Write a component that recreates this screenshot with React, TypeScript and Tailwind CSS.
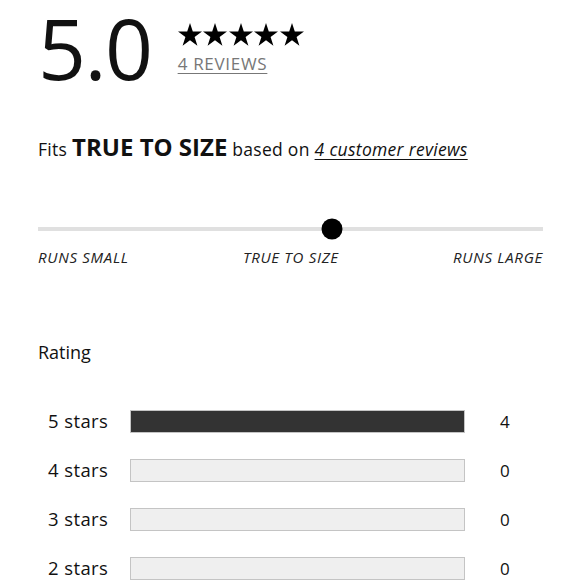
import React from "react";

const FONT = "font-['Open_Sans','Liberation_Sans',sans-serif]";

const ROWS = [
  { label: "5 stars", count: 4 },
  { label: "4 stars", count: 0 },
  { label: "3 stars", count: 0 },
  { label: "2 stars", count: 0 },
  { label: "1 star", count: 0 },
];

function Star() {
  return (
    <svg viewBox="0 0 24 23" className="h-[23px] w-[24px]" fill="#000">
      <path d="M12 0l2.8 8.5h9.2l-7.4 5.4 2.8 8.9L12 17.3l-7.4 5.5 2.8-8.9L0 8.5h9.2z" />
    </svg>
  );
}

export default function App() {
  const total = 4;
  return (
    <div className={`${FONT} h-[580px] w-[580px] overflow-hidden bg-white text-[#111]`}>
      <div className="pl-[38px] pr-[37px] pt-[6px]">
        <div className="flex items-start gap-[26px]">
          <div className="text-[84px] font-normal leading-none tracking-[-1.5px]">5.0</div>
          <div className="flex flex-col pt-[17px]">
            <div className="flex gap-[1.5px]">
              <Star />
              <Star />
              <Star />
              <Star />
              <Star />
            </div>
            <a className="mt-[9px] text-[17px] leading-none tracking-[0.7px] text-[#777] underline underline-offset-[3px]">
              4 REVIEWS
            </a>
          </div>
        </div>

        <p className="mt-[45px] text-[17.5px] leading-none tracking-[0.3px]">
          Fits <span className="text-[24px] font-bold tracking-[0px]">TRUE TO SIZE</span> based on{" "}
          <span className="italic underline underline-offset-[3px]">4 customer reviews</span>
        </p>

        <div className="relative mt-[68px] h-[4px] bg-[#e0e0e0]">
          <div className="absolute left-[58.3%] top-1/2 h-[21px] w-[21px] -translate-x-1/2 -translate-y-1/2 rounded-full bg-black" />
        </div>
        <div className="mt-[19px] flex justify-between text-[15px] italic leading-none tracking-[0.7px] text-[#222]">
          <span>RUNS SMALL</span>
          <span>TRUE TO SIZE</span>
          <span>RUNS LARGE</span>
        </div>

        <div className="mt-[78px] text-[18px] leading-none">Rating</div>

        <div className="mt-[49px] flex flex-col gap-[26px]">
          {ROWS.map((r, i) => (
            <div key={`row-${i}`} className="flex items-center">
              <span className="w-[92px] pl-[10px] text-[18.5px] leading-none tracking-[0.4px]">{r.label}</span>
              <div className="h-[23px] w-[335px] border-[1.5px] border-[#c4c4c4] bg-[#efefef]">
                <div className="h-full bg-[#333]" style={{ width: `${(r.count / total) * 100}%` }} />
              </div>
              <span className="pl-[35px] text-[17px] leading-none">{r.count}</span>
            </div>
          ))}
        </div>
      </div>
    </div>
  );
}
